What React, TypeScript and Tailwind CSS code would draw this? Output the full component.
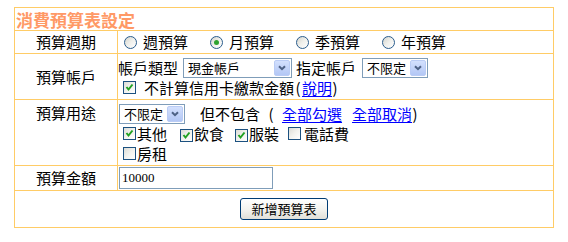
import React from "react";

const FONT = { fontFamily: '"Noto Sans CJK TC", "Noto Sans", sans-serif' };

function Radio({ checked }: { checked?: boolean }) {
  return (
    <span className="relative inline-flex w-[13px] h-[13px] shrink-0 rounded-full border border-[#2A5C8C] bg-gradient-to-br from-[#D4D4CC] via-[#F0F0EC] to-white items-center justify-center">
      {checked && <span className="w-[5px] h-[5px] rounded-full bg-[#2EA32E]" />}
    </span>
  );
}

function Check({ checked }: { checked?: boolean }) {
  return (
    <span className="inline-flex w-[13px] h-[13px] shrink-0 border border-[#1C5180] bg-gradient-to-br from-[#DCDCD6] via-[#F2F2EE] to-white items-center justify-center">
      {checked && (
        <svg width="9" height="9" viewBox="0 0 9 9">
          <path d="M1.5 4 L3.5 6.5 L7.5 1.5" stroke="#21A121" strokeWidth="2" fill="none" />
        </svg>
      )}
    </span>
  );
}

function Select({ w, label }: { w: string; label: string }) {
  return (
    <div className={`flex items-center h-[20px] border border-[#7F9DB9] bg-white ${w}`}>
      <span className="flex-1 pl-[4px] text-[13px] leading-[18px] text-black whitespace-nowrap">{label}</span>
      <span className="w-[16px] h-[16px] mr-[1px] rounded-[2px] bg-gradient-to-b from-[#D3E0FD] to-[#B3C7F5] border border-[#BACCF5] flex items-center justify-center">
        <svg width="8" height="6" viewBox="0 0 8 6">
          <path d="M1 1.2 L4 4.2 L7 1.2" stroke="#4D6185" strokeWidth="2" fill="none" />
        </svg>
      </span>
    </div>
  );
}

function Option({ label, checked, last }: { label: string; checked?: boolean; last?: boolean }) {
  return (
    <div className={`flex items-center ${last ? "" : "w-[86px]"}`}>
      <Radio checked={checked} />
      <span className="ml-[6px]">{label}</span>
    </div>
  );
}

const Link = ({ children, className = "" }: { children: React.ReactNode; className?: string }) => (
  <a href="#" className={`text-[#0000FF] underline underline-offset-[2px] ${className}`}>
    {children}
  </a>
);

export default function App() {
  return (
    <div className="w-[568px] h-[242px] bg-white pt-[7px] pl-[14px] text-black text-[15px] leading-[20px]" style={FONT}>
      <div className="w-[540px] border border-[#FFCC66] flex flex-col">
        {/* Title */}
        <div className="h-[22px] flex items-center pl-[1px] pt-[1px]">
          <span className="text-[17px] font-bold text-[#FF9966] leading-[22px]">消費預算表設定</span>
        </div>

        {/* Row 1 */}
        <div className="h-[23px] border-t border-[#FFCC66] flex">
          <div className="w-[103px] border-r border-[#FFCC66] flex items-center justify-center">預算週期</div>
          <div className="flex-1 flex items-center pl-[6px]">
            <Option label="週預算" />
            <Option label="月預算" checked />
            <Option label="季預算" />
            <Option label="年預算" last />
          </div>
        </div>

        {/* Row 2 */}
        <div className="h-[46px] border-t border-[#FFCC66] flex">
          <div className="w-[103px] border-r border-[#FFCC66] flex items-center justify-center">預算帳戶</div>
          <div className="flex-1 flex flex-col pt-[4px]">
            <div className="h-[20px] flex items-center">
              <span>帳戶類型</span>
              <div className="ml-[5px]">
                <Select w="w-[109px]" label="現金帳戶" />
              </div>
              <span className="ml-[4px]">指定帳戶</span>
              <div className="ml-[6px]">
                <Select w="w-[66px]" label="不限定" />
              </div>
            </div>
            <div className="h-[17px] mt-[1px] flex items-center pl-[5px]">
              <Check checked />
              <span className="ml-[8px]">不計算信用卡繳款金額</span>
              <span className="inline-block w-[8px] text-center">(</span>
              <Link>說明</Link>
              <span className="inline-block w-[6px] text-center">)</span>
            </div>
          </div>
        </div>

        {/* Row 3 */}
        <div className="h-[66px] border-t border-[#FFCC66] flex">
          <div className="w-[103px] border-r border-[#FFCC66] flex justify-center pt-[3px]">預算用途</div>
          <div className="flex-1 flex flex-col pt-[4px]">
            <div className="h-[20px] flex items-center">
              <div className="ml-[1px]">
                <Select w="w-[66px]" label="不限定" />
              </div>
              <span className="ml-[15px]">但不包含</span>
              <span className="ml-[8px] inline-block w-[6px] text-center">(</span>
              <Link className="ml-[8px]">全部勾選</Link>
              <Link className="ml-[10px]">全部取消</Link>
              <span className="inline-block w-[6px] text-center">)</span>
            </div>
            <div className="h-[19px] flex items-center pl-[5px]">
              <Check checked />
              <span className="ml-[1px]">其他</span>
              <span className="ml-[13px]"><Check checked /></span>
              <span className="ml-[1px]">飲食</span>
              <span className="ml-[11px]"><Check checked /></span>
              <span className="ml-[1px]">服裝</span>
              <span className="ml-[9px]"><Check /></span>
              <span className="ml-[3px]">電話費</span>
            </div>
            <div className="h-[21px] flex items-center pl-[5px]">
              <Check />
              <span className="ml-[1px]">房租</span>
            </div>
          </div>
        </div>

        {/* Row 4 */}
        <div className="h-[25px] border-t border-[#FFCC66] flex">
          <div className="w-[103px] border-r border-[#FFCC66] flex items-center justify-center">預算金額</div>
          <div className="flex-1 flex items-center">
            <input
              defaultValue="10000"
              className="ml-[1px] w-[154px] h-[22px] border border-[#7F9DB9] pl-[2px] text-[13px] outline-none"
              style={{ fontFamily: '"Liberation Serif", serif' }}
            />
          </div>
        </div>

        {/* Row 5 */}
        <div className="h-[37px] border-t border-[#FFCC66] flex items-center justify-center">
          <button className="w-[88px] h-[22px] rounded-[3px] border border-[#003C74] bg-gradient-to-b from-white via-[#F4F4F0] to-[#E0DFD8] text-[13px] leading-[18px] text-black">
            新增預算表
          </button>
        </div>
      </div>
    </div>
  );
}
